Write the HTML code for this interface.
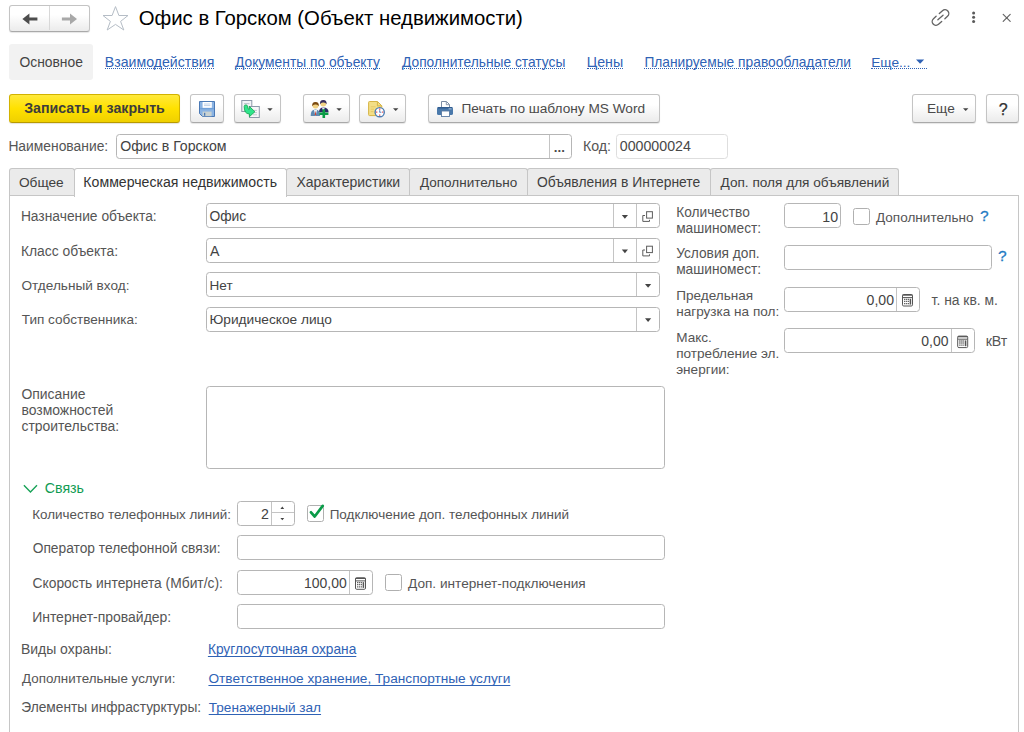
<!DOCTYPE html>
<html lang="ru"><head><meta charset="utf-8"><title>Офис в Горском (Объект недвижимости)</title>
<style>
html,body{margin:0;padding:0;background:#fff;}
body{width:1024px;height:732px;position:relative;overflow:hidden;font-family:"Liberation Sans",Arial,sans-serif;font-size:13.333px;color:#555;}
.a{position:absolute;white-space:nowrap;}
.t{position:absolute;white-space:nowrap;line-height:16px;height:16px;}
.v{color:#434343;}
.btn{position:absolute;box-sizing:border-box;border:1px solid #c4c4c4;border-bottom-color:#a9a9a9;border-radius:3px;background:linear-gradient(#fff 35%,#ebebeb);box-shadow:0 1px 1px rgba(0,0,0,.10);}
.fld{position:absolute;box-sizing:border-box;border:1px solid #b6b6b6;border-radius:3.5px;background:#fff;}
.lnk{color:#2f62b5;text-decoration:underline;text-underline-offset:2px;text-decoration-skip-ink:none;text-decoration-thickness:1px;}
.nav{color:#2f62b5;border-bottom:1px dotted #2f62b5;height:14px;}
.tab{position:absolute;box-sizing:border-box;top:168px;height:27px;border:1px solid #c6c6c6;border-bottom:none;border-radius:3px 3px 0 0;background:#ebebeb;}
.cb{position:absolute;box-sizing:border-box;width:17px;height:17px;border:1px solid #b0b0b0;border-radius:2.5px;background:#fff;}
.sep{position:absolute;width:1px;background:#c4c4c4;}
.ml{position:absolute;line-height:16px;white-space:nowrap;}
svg{position:absolute;overflow:visible;}
</style></head><body>

<!-- title row -->
<div class="btn" style="left:9px;top:5px;width:81px;height:27px;"></div>
<div class="sep" style="left:49px;top:6px;height:24px;background:#d8d8d8"></div>
<svg style="left:22px;top:12px" width="16" height="14" viewBox="0 0 16 14"><path d="M0.4 7 L7.4 1.6 L7.4 5.6 L15.4 5.6 L15.4 8.5 L7.4 8.5 L7.4 12.4 Z" fill="#4d4d4d"/></svg>
<svg style="left:61px;top:12px" width="16" height="14" viewBox="0 0 16 14"><path d="M16 7 L9 1.6 L9 5.6 L0.9 5.6 L0.9 8.5 L9 8.5 L9 12.4 Z" fill="#a8a8a8"/></svg>
<svg style="left:0;top:0" width="140" height="36" viewBox="0 0 140 36"><path d="M115.5 6.6 L118.9 15.5 L128 15.5 L120.6 21.4 L123.8 30 L115.5 24.4 L107.2 30 L110.4 21.4 L103 15.5 L112.1 15.5 Z" fill="none" stroke="#b5bdc6" stroke-width="1"/></svg>
<div id="title" class="t" style="left:138.69px;top:5px;font-size:20.34px;line-height:26px;height:26px;color:#000;">Офис в Горском (Объект недвижимости)</div>
<svg style="left:920px;top:0" width="104" height="36" viewBox="920 0 104 36" fill="none" stroke="#5a5a5a" stroke-linecap="round">
 <g transform="translate(940.5 17.5) rotate(-41.6)" stroke-width="1.35" stroke="#636363">
  <path d="M1.8 -3.8 H6 a3.8 3.8 0 0 1 0 7.6 H2.5"/><path d="M-1.8 3.8 H-6 a3.8 3.8 0 0 1 0 -7.6 H-2.5"/><path d="M-3.5 0 H3.4"/>
 </g>
 <g fill="#5a5a5a" stroke="none"><circle cx="973.6" cy="13" r="1.5"/><circle cx="973.6" cy="17.3" r="1.5"/><circle cx="973.6" cy="21.6" r="1.5"/></g>
 <path d="M1003.2 14.3 L1010.2 21.3 M1010.2 14.3 L1003.2 21.3" stroke-width="1.2" stroke="#666"/>
</svg>

<!-- nav row -->
<div class="a" style="left:9px;top:44px;width:84px;height:36px;background:#f2f2f2;border-radius:3px;"></div>
<div id="n0" class="t" style="left:19.45px;top:54px;font-size:13.87px;color:#444;">Основное</div>
<div id="n1" class="t nav" style="left:104.87px;top:54px;font-size:14.13px;">Взаимодействия</div>
<div id="n2" class="t nav" style="left:235.0px;top:54px;font-size:13.81px;line-height:17px;">Документы по объекту</div>
<div id="n3" class="t nav" style="left:402.0px;top:54px;font-size:13.79px;line-height:17px;">Дополнительные статусы</div>
<div id="n4" class="t nav" style="left:586.7px;top:54px;font-size:14.2px;">Цены</div>
<div id="n5" class="t nav" style="left:644.4px;top:54px;font-size:13.79px;line-height:17px;">Планируемые правообладатели</div>
<div id="n6" class="t nav" style="left:871.15px;top:54px;font-size:13.7px;line-height:17px;width:56px;">Еще...</div>
<svg style="left:915px;top:58px" width="10" height="6" viewBox="0 0 10 6"><path d="M1 1.4 H9.2 L5.1 5.8 Z" fill="#2f62b5"/></svg>

<!-- command bar -->
<div class="btn" style="left:9px;top:94px;width:171px;height:29px;background:linear-gradient(#ffe93b,#ffe100 50%,#efd000);border-color:#d2b200;border-bottom-color:#b89a00;box-shadow:0 1px 1px rgba(90,70,0,.15);"></div>
<div id="c0" class="t" style="left:24.24px;top:100px;font-size:14.2px;font-weight:bold;color:#3d3d3d;">Записать и закрыть</div>
<div class="btn" style="left:190px;top:94px;width:34px;height:29px;"></div>
<div class="btn" style="left:234px;top:94px;width:47px;height:29px;"></div>
<div class="btn" style="left:303px;top:94px;width:47px;height:29px;"></div>
<div class="btn" style="left:359px;top:94px;width:47px;height:29px;"></div>
<div class="btn" style="left:428px;top:94px;width:232px;height:29px;"></div>
<div id="c1" class="t" style="left:461.51px;top:101px;font-size:13.66px;color:#4a4a4a;">Печать по шаблону MS Word</div>
<div class="btn" style="left:912px;top:94px;width:64px;height:29px;"></div>
<div id="c2" class="t" style="left:927.01px;top:101px;font-size:13.63px;color:#4a4a4a;">Еще</div>
<div class="btn" style="left:986px;top:94px;width:33px;height:29px;"></div>
<div id="c3" class="t" style="left:998.66px;top:101px;font-size:16.04px;color:#333;-webkit-text-stroke:0.25px #333;">?</div>

<!-- toolbar icons -->
<svg style="left:190px;top:94px" width="480" height="28" viewBox="190 94 480 28">
 <!-- floppy -->
 <path d="M199.5 101.5 H214.5 V116.5 H202.5 L199.5 113.5 Z" fill="#8ab3e3" stroke="#4b79b5" stroke-width="1"/>
 <rect x="202.6" y="102" width="9.2" height="5.8" fill="#fff"/>
 <path d="M204 104 H210.4 M204 105.6 H210.4" stroke="#b9cde6" stroke-width="0.9"/>
 <rect x="200.2" y="108" width="13.6" height="1.3" fill="#6f9fd8"/>
 <rect x="202.6" y="111.6" width="9" height="4.6" fill="#c9d2d2"/>
 <rect x="204" y="112.8" width="1.3" height="3" fill="#4b79b5"/>
 <!-- copy -->
 <rect x="241.8" y="100.5" width="10" height="11" fill="#f3f4f7" stroke="#8d99aa" stroke-width="1"/>
 <path d="M244 103.6 H249.5" stroke="#c3c8d2" stroke-width="1.2"/>
 <rect x="249.5" y="106.5" width="9.8" height="11" fill="#f6f7f9" stroke="#8d99aa" stroke-width="1"/>
 <path d="M254 110.4 H257 M254 112.6 H257 M253 114.8 H257" stroke="#c3c8d2" stroke-width="1"/>
 <path d="M244.2 106.6 Q244.2 104.8 246 104.9 Q247.6 105 247.6 106.8 Q247.5 109.4 249.2 109.3 L249.2 106.2 L254.9 111.7 L249.4 116.7 L249.3 113.9 Q244.2 114 244.2 106.6 Z" fill="#2ee58c" stroke="#19a852" stroke-width="0.9" stroke-linejoin="round"/>
 <path d="M267.3 108.2 H272.7 L270 111 Z" fill="#444"/>
 <!-- users -->
 <path d="M319 112.3 Q319 107.6 323.3 107.6 Q328.6 107.6 328.6 112.3 Z" fill="#2b2a62"/>
 <path d="M322 107.8 L323.4 111.5 L324.8 107.8 Z" fill="#e9e9f2"/>
 <circle cx="323.3" cy="103.6" r="3" fill="#f1d283"/>
 <path d="M320 104.2 Q319.6 99.9 323.3 99.9 Q327 99.9 326.6 104.2 Q325.4 102.2 323.3 102.5 Q321.2 102.2 320 104.2 Z" fill="#3a305f"/>
 <path d="M310.7 115.9 Q310.5 109.6 315.5 109.6 Q320.2 109.6 320 115.9 Z" fill="#5d8ab3"/>
 <path d="M313.9 109.9 L315.5 115.9 L317.1 109.9 Z" fill="#eef2f6"/>
 <path d="M315.5 110.8 L316.2 114.6 L315.5 115.8 L314.8 114.6 Z" fill="#d8452e"/>
 <circle cx="315.5" cy="105.6" r="3" fill="#f1d283"/>
 <path d="M312.2 106.2 Q311.8 101.9 315.5 101.9 Q319.2 101.9 318.8 106.2 Q317.6 104.2 315.5 104.5 Q313.4 104.2 312.2 106.2 Z" fill="#7a4a12"/>
 <path d="M323.8 109.2 V118 M319.4 113.7 H328.4" stroke="#0a9c46" stroke-width="2.6"/>
 <path d="M336.4 108.2 H341.8 L339.1 111 Z" fill="#444"/>
 <!-- doc clock -->
 <path d="M369.5 101.5 H377.5 L381.8 105.8 V115.6 H369.5 Q368.6 115.6 368.6 114.6 V102.4 Q368.6 101.5 369.5 101.5 Z" fill="#f3de86" stroke="#d6b445" stroke-width="1"/>
 <path d="M377.4 101.8 V105.9 H381.6" fill="none" stroke="#d6b445" stroke-width="1"/>
 <path d="M370.8 106.8 H375.6 M370.8 109.2 H374 M370.8 111.6 H373.5" stroke="#e3c766" stroke-width="0.9"/>
 <circle cx="379.7" cy="112.2" r="4.6" fill="#fff" stroke="#4b7cb3" stroke-width="1.4"/>
 <path d="M379.7 108.6 V109.8 M379.7 114.6 V115.8 M376.1 112.2 H377.3 M382.1 112.2 H383.3" stroke="#e5484d" stroke-width="1.3"/>
 <path d="M379.7 112.4 V110.2 M379.7 112.2 H381.4" stroke="#5b86c4" stroke-width="1.1"/>
 <path d="M393 108.2 H398.4 L395.7 111 Z" fill="#444"/>
 <!-- printer -->
 <path d="M441.5 107.3 V101.5 H446.5 L449.5 104.5 V107.3" fill="#fff" stroke="#7c8ca3" stroke-width="1"/>
 <path d="M446.3 101.8 V104.7 H449.3" fill="none" stroke="#7c8ca3" stroke-width="0.9"/>
 <rect x="437" y="107" width="16" height="8" rx="1.6" fill="#4a79ab"/>
 <rect x="437.6" y="107" width="14.8" height="1.6" rx="0.8" fill="#2f5b8e"/>
 <rect x="448.6" y="108.4" width="3" height="0.9" fill="#b8cce3"/>
 <rect x="441.5" y="111" width="8" height="5.5" fill="#fff" stroke="#5b7ba3" stroke-width="0.9"/>
</svg>
<svg style="left:962px;top:107px" width="8" height="5" viewBox="0 0 8 5"><path d="M1 1.2 H6.4 L3.7 4 Z" fill="#444"/></svg>

<!-- name row -->
<div id="f0" class="t" style="left:8.39px;top:138px;font-size:13.85px;">Наименование:</div>
<div class="fld" style="left:116px;top:134px;width:456px;height:25px;"></div>
<div class="sep" style="left:549px;top:135px;height:23px;"></div>
<div id="f1" class="t v" style="left:120.18px;top:138px;font-size:14.15px;">Офис в Горском</div>
<div id="f2" class="t" style="left:553.79px;top:140px;font-size:13.35px;font-weight:bold;color:#4a4a4a;">...</div>
<div id="f3" class="t" style="left:583.01px;top:138px;font-size:14.2px;">Код:</div>
<div class="fld" style="left:616px;top:134px;width:112px;height:25px;border-color:#dedede"></div>
<div id="f4" class="t v" style="left:619.81px;top:138px;font-size:14.2px;color:#484848;">000000024</div>

<!-- tabs -->
<div class="a" style="left:9px;top:195px;width:1010px;height:560px;box-sizing:border-box;border:1px solid #c6c6c6;"></div>
<div class="tab" style="left:9px;width:66px;"></div>
<div class="tab" style="left:286px;width:124px;"></div>
<div class="tab" style="left:409px;width:119px;"></div>
<div class="tab" style="left:527px;width:184px;"></div>
<div class="tab" style="left:710px;width:189px;"></div>
<div class="tab" style="left:74px;width:213px;background:#fff;height:29px;"></div>
<div id="t0" class="t" style="left:18.95px;top:175px;font-size:13.68px;color:#404040;">Общее</div>
<div id="t1" class="t" style="left:83.37px;top:174px;font-size:14.11px;color:#333;">Коммерческая недвижимость</div>
<div id="t2" class="t" style="left:296.47px;top:174px;font-size:13.99px;color:#404040;">Характеристики</div>
<div id="t3" class="t" style="left:420.0px;top:175px;font-size:13.51px;color:#404040;">Дополнительно</div>
<div id="t4" class="t" style="left:536.95px;top:174px;font-size:13.86px;color:#404040;">Объявления в Интернете</div>
<div id="t5" class="t" style="left:720.5px;top:175px;font-size:13.64px;color:#404040;">Доп. поля для объявлений</div>

<!-- left column -->
<div id="l0" class="t" style="left:20.9px;top:209px;font-size:13.8px;">Назначение объекта:</div>
<div class="fld" style="left:206px;top:203px;width:454px;height:25px;"></div>
<div id="l0v" class="t v" style="left:209.45px;top:208px;font-size:13.85px;">Офис</div>
<div id="l1" class="t" style="left:20.89px;top:243px;font-size:13.89px;">Класс объекта:</div>
<div class="fld" style="left:206px;top:238px;width:454px;height:25px;"></div>
<div id="l1v" class="t v" style="left:209.94px;top:243px;font-size:14.2px;">A</div>
<div id="l2" class="t" style="left:21.46px;top:278px;font-size:13.61px;">Отдельный вход:</div>
<div class="fld" style="left:206px;top:272px;width:454px;height:25px;"></div>
<div id="l2v" class="t v" style="left:209.52px;top:278px;font-size:13.56px;">Нет</div>
<div id="l3" class="t" style="left:21.73px;top:312px;font-size:13.57px;">Тип собственника:</div>
<div class="fld" style="left:206px;top:307px;width:454px;height:25px;"></div>
<div id="l3v" class="t v" style="left:209.5px;top:312px;font-size:13.7px;">Юридическое лицо</div>
<div class="sep" style="left:613px;top:204px;height:23px;"></div><div class="sep" style="left:636px;top:204px;height:23px;"></div>
<div class="sep" style="left:613px;top:239px;height:23px;"></div><div class="sep" style="left:636px;top:239px;height:23px;"></div>
<div class="sep" style="left:636px;top:273px;height:23px;"></div>
<div class="sep" style="left:636px;top:308px;height:23px;"></div>
<svg style="left:600px;top:196px" width="70" height="140" viewBox="600 196 70 140">
 <g fill="#444"><path d="M621.8 215 H628 L624.9 218.7 Z"/><path d="M621.8 249.5 H628 L624.9 253.2 Z"/><path d="M645 284 H651.2 L648.1 287.7 Z"/><path d="M645 318.3 H651.2 L648.1 322 Z"/></g>
 <g fill="none" stroke="#5c5c5c" stroke-width="1"><rect x="646.6" y="211.7" width="5.8" height="6.4"/><path d="M645 215.5 H642.8 V221.4 H649.5 V219.8"/>
 <rect x="646.6" y="246.2" width="5.8" height="6.4"/><path d="M645 250 H642.8 V255.9 H649.5 V254.3"/></g>
</svg>

<div id="m4" class="ml" style="left:21.44px;top:386px;font-size:13.94px;">Описание<br>возможностей<br>строительства:</div>
<div class="fld" style="left:206px;top:386px;width:459px;height:83px;"></div>

<svg style="left:20px;top:480px" width="20" height="16" viewBox="20 480 20 16"><path d="M23.9 485.3 L30.45 491.9 L37 485.3" fill="none" stroke="#17a257" stroke-width="1.4"/></svg>
<div id="g" class="t" style="left:44.77px;top:480px;font-size:14.2px;color:#0f9b52;">Связь</div>
<div id="s0" class="t" style="left:32.18px;top:507px;font-size:13.42px;">Количество телефонных линий:</div>
<div class="fld" style="left:237px;top:501px;width:58px;height:25px;"></div>
<div class="sep" style="left:271px;top:502px;height:23px;"></div>
<div class="a" style="left:272px;top:512px;width:22px;height:1px;background:#c4c4c4"></div>
<svg style="left:278px;top:504px" width="10" height="20" viewBox="278 504 10 20"><path d="M280.4 508.9 H284.2 L282.3 506.6 Z M280.4 517.9 H284.2 L282.3 520.2 Z" fill="#444"/></svg>
<div id="s0v" class="t v" style="left:261.02px;top:506px;font-size:14.2px;">2</div>
<div class="cb" style="left:307px;top:505px;"></div>
<svg style="left:304px;top:500px" width="24" height="24" viewBox="304 500 24 24"><path d="M311 512.3 L314.7 516.5 L322.7 505.9" fill="none" stroke="#0a9b48" stroke-width="2.7" stroke-linecap="round" stroke-linejoin="round"/></svg>
<div id="s0c" class="t" style="left:329.67px;top:507px;font-size:13.49px;">Подключение доп. телефонных линий</div>
<div id="s1" class="t" style="left:32.7px;top:541px;font-size:13.78px;">Оператор телефонной связи:</div>
<div class="fld" style="left:237px;top:535px;width:428px;height:25px;"></div>
<div id="s2" class="t" style="left:32.56px;top:575px;font-size:13.83px;">Скорость интернета (Мбит/с):</div>
<div class="fld" style="left:237px;top:570px;width:136px;height:25px;"></div>
<div class="sep" style="left:349px;top:571px;height:23px;"></div>
<div id="s2v" class="t v" style="left:304.02px;top:575px;font-size:13.97px;">100,00</div>
<div class="cb" style="left:385px;top:574px;"></div>
<div id="s2c" class="t" style="left:408.0px;top:576px;font-size:13.65px;">Доп. интернет-подключения</div>
<div id="s3" class="t" style="left:32.13px;top:609px;font-size:13.97px;">Интернет-провайдер:</div>
<div class="fld" style="left:237px;top:604px;width:428px;height:25px;"></div>

<div id="b0" class="t" style="left:20.88px;top:641px;font-size:13.99px;">Виды охраны:</div>
<div id="b0v" class="t lnk" style="left:207.9px;top:642px;font-size:13.73px;">Круглосуточная охрана</div>
<div id="b1" class="t" style="left:22.0px;top:671px;font-size:13.38px;">Дополнительные услуги:</div>
<div id="b1v" class="t lnk" style="left:208.45px;top:671px;font-size:13.67px;">Ответственное хранение, Транспортные услуги</div>
<div id="b2" class="t" style="left:21.31px;top:700px;font-size:13.74px;">Элементы инфрастурктуры:</div>
<div id="b2v" class="t lnk" style="left:208.73px;top:700px;font-size:13.6px;">Тренажерный зал</div>

<!-- right column -->
<div id="m0" class="ml" style="left:676.18px;top:205px;font-size:13.73px;">Количество<br>машиномест:</div>
<div class="fld" style="left:784px;top:203px;width:57px;height:25px;"></div>
<div id="r0v" class="t v" style="left:822.36px;top:209px;font-size:14.2px;">10</div>
<div class="cb" style="left:853px;top:208px;"></div>
<div id="r0c" class="t" style="left:876.0px;top:210px;font-size:13.55px;">Дополнительно</div>
<div id="r0q" class="t" style="left:979.96px;top:208px;font-size:15.5px;color:#1f7ac3;-webkit-text-stroke:0.3px #1f7ac3;">?</div>
<div id="m1" class="ml" style="left:676.18px;top:246px;font-size:13.73px;">Условия доп.<br>машиномест:</div>
<div class="fld" style="left:784px;top:245px;width:208px;height:25px;"></div>
<div id="r1q" class="t" style="left:997.96px;top:248px;font-size:15.5px;color:#1f7ac3;-webkit-text-stroke:0.3px #1f7ac3;">?</div>
<div id="m2" class="ml" style="left:676.19px;top:288px;font-size:13.57px;">Предельная<br>нагрузка на пол:</div>
<div class="fld" style="left:784px;top:287px;width:136px;height:25px;"></div>
<div class="sep" style="left:896px;top:288px;height:23px;"></div>
<div id="r2v" class="t v" style="left:866.58px;top:292px;font-size:14.09px;">0,00</div>
<div id="r2u" class="t" style="left:931.61px;top:292px;font-size:13.89px;">т. на кв. м.</div>
<div id="m3" class="ml" style="left:676.18px;top:330px;font-size:13.59px;">Макс.<br>потребление эл.<br>энергии:</div>
<div class="fld" style="left:784px;top:328px;width:191px;height:25px;"></div>
<div class="sep" style="left:951px;top:329px;height:23px;"></div>
<div id="r3v" class="t v" style="left:921.33px;top:333px;font-size:13.96px;">0,00</div>
<div id="r3u" class="t" style="left:985.65px;top:333px;font-size:14.2px;">кВт</div>

<!-- calc icons -->
<svg style="left:0;top:0" width="1024" height="732" viewBox="0 0 1024 732" pointer-events="none">
 <defs><g id="calc"><rect x="0.5" y="0.5" width="10" height="11.5" rx="1.2" fill="#fff" stroke="#555" stroke-width="1"/><rect x="0.5" y="0.5" width="10" height="1.2" fill="#555"/><path d="M1 3.6 H10" stroke="#555" stroke-width="1"/><path d="M2 5.4 H7 M2 7.4 H7 M2 9.6 H7" stroke="#666" stroke-width="1.3" stroke-dasharray="1.4 0.6"/><path d="M8.4 4.8 V10.6" stroke="#555" stroke-width="1.5"/></g></defs>
 <use href="#calc" x="355" y="577.3"/>
 <use href="#calc" x="902" y="294"/>
 <use href="#calc" x="957.2" y="335.6"/>
</svg>

</body></html>
